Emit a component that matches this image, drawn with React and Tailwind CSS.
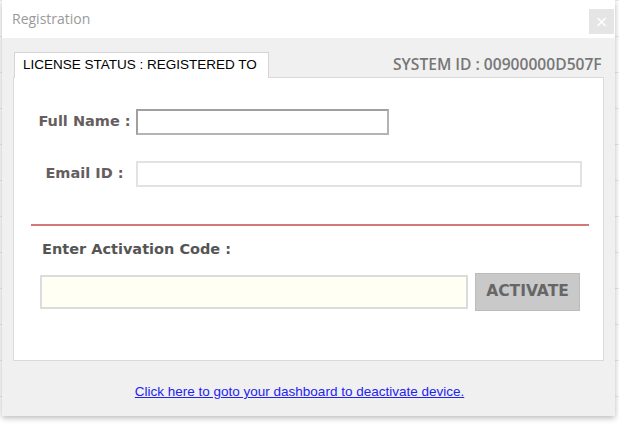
export default function App() {
  return (
    <div className="w-[619px] h-[427px] bg-white overflow-hidden pl-[2px] bg-[linear-gradient(#e9e9e9_1px,transparent_1px)] bg-[length:100%_36px]">
      <div className="w-[613px] h-[416px] bg-[#f0f0f0] flex flex-col shadow-[0_2px_6px_rgba(0,0,0,0.28)]">
        {/* title bar */}
        <div className="h-[38px] shrink-0 bg-white flex items-start justify-between pl-[10px]">
          <span className="mt-[8px] text-[14px] text-[#9a9a9a] font-['Open_Sans',sans-serif]">Registration</span>
          <div className="mt-[9px] mr-[1px] w-[25px] h-[25px] bg-[#e5e5e5] flex items-center justify-center text-white text-[16px] leading-none font-['DejaVu_Sans',sans-serif]">
            ×
          </div>
        </div>

        <div className="pl-[11px] pt-[14px]">
          {/* tabs row */}
          <div className="w-[590px] h-[25px] flex items-end">
            <div className="ml-[1px] w-[255px] h-[26px] -mb-px bg-white border border-b-0 border-[#d4d4d4] flex items-center pl-[8px] text-[13.5px] text-black whitespace-nowrap font-['Liberation_Sans',Arial,sans-serif] relative z-10">
              LICENSE STATUS : REGISTERED TO
            </div>
            <div className="flex-1 min-w-0 whitespace-nowrap self-center pl-[124px] text-[15.6px] font-semibold text-[#777] font-['Open_Sans',sans-serif]">
              SYSTEM ID : 00900000D507F
            </div>
          </div>

          {/* panel */}
          <div className="w-[591px] h-[284px] bg-white border border-[#dadada] pt-[31px]">
            <div className="flex items-center">
              <div className="ml-[22px] w-[97px] text-center text-[14.5px] font-bold text-[#665e5e] font-['DejaVu_Sans',Verdana,sans-serif]">
                Full Name :
              </div>
              <div className="ml-[3px] w-[253px] h-[26px] border-2 border-[#a0a0a0] border-r-[#b4b4b4] border-b-[#b4b4b4]" />
            </div>
            <div className="flex items-center mt-[26px]">
              <div className="ml-[22px] w-[97px] text-center text-[14.5px] font-bold text-[#665e5e] font-['DejaVu_Sans',Verdana,sans-serif]">
                Email ID :
              </div>
              <div className="ml-[3px] w-[446px] h-[26px] border-2 border-[#e2e2e2]" />
            </div>

            <div className="ml-[17px] mt-[37px] w-[558px] h-[2px] bg-[#d47a76]" />

            <div className="ml-[28px] mt-[13px] text-[14.5px] font-bold text-[#555] font-['DejaVu_Sans',Verdana,sans-serif]">
              Enter Activation Code :
            </div>

            <div className="flex items-center ml-[26px] mt-[12px]">
              <div className="w-[428px] h-[34px] bg-[#fffff4] border-2 border-[#dcdcdc]" />
              <div className="ml-[7px] w-[105px] h-[38px] bg-[#c9c9c9] border border-[#bcbcbc] flex items-center justify-center text-[15.5px] font-bold text-[#666] font-['DejaVu_Sans',Verdana,sans-serif]">
                ACTIVATE
              </div>
            </div>
          </div>
        </div>

        {/* footer link */}
        <div className="flex-1 flex items-center justify-center pr-[18px] pt-[8px]">
          <a href="#" className="text-[13.5px] text-[#2323ee] underline font-['Liberation_Sans',Arial,sans-serif]">
            Click here to goto your dashboard to deactivate device.
          </a>
        </div>
      </div>
    </div>
  );
}
